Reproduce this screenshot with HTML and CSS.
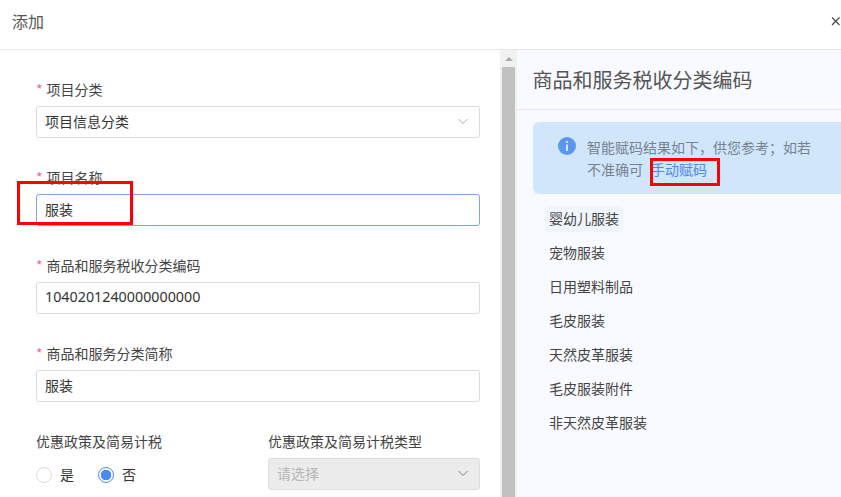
FILE: index.html
```html
<!DOCTYPE html>
<html lang="zh">
<head>
<meta charset="utf-8">
<title>添加</title>
<link rel="stylesheet" href="styles.css">
</head>
<body>
<div class="dialog">
  <header class="head">
    <span class="title">添加</span>
    <svg class="close" viewBox="0 0 10 10"><path d="M1 1.500l7.500 7.500M8.500 1.500L1 9"/></svg>
  </header>
  <div class="main">
    <form class="form">
      <div class="field">
        <div class="label"><i>*</i>项目分类</div>
        <div class="input">项目信息分类
          <svg class="chev" viewBox="0 0 12 7"><path d="M1.500 1l4.500 4.500L10.500 1"/></svg>
        </div>
      </div>
      <div class="field">
        <div class="label"><i>*</i>项目名称</div>
        <div class="input focus">服装</div>
        <div class="mark m1"></div>
      </div>
      <div class="field">
        <div class="label"><i>*</i>商品和服务税收分类编码</div>
        <div class="input code">1040201240000000000</div>
      </div>
      <div class="field">
        <div class="label"><i>*</i>商品和服务分类简称</div>
        <div class="input">服装</div>
      </div>
      <div class="cols">
        <div class="col-a">
          <div class="label">优惠政策及简易计税</div>
          <div class="radios">
            <span class="radio"><b class="dot"></b>是</span>
            <span class="radio"><b class="dot on"></b>否</span>
          </div>
        </div>
        <div class="col-b">
          <div class="label">优惠政策及简易计税类型</div>
          <div class="input disabled">请选择
            <svg class="chev dark" viewBox="0 0 12 7"><path d="M1.500 1l4.500 4.500L10.500 1"/></svg>
          </div>
        </div>
      </div>
    </form>
    <div class="scrollbar">
      <svg class="arrow" viewBox="0 0 8 4"><path d="M4 0l4 4H0z"/></svg>
      <div class="thumb"></div>
    </div>
    <aside class="side">
      <h2 class="side-title">商品和服务税收分类编码</h2>
      <div class="notice">
        <svg class="info" viewBox="0 0 18 18"><circle cx="9" cy="9" r="9"/><rect x="8" y="7.500" width="2" height="6.500"/><rect x="8" y="4" width="2" height="2"/></svg>
        <p class="notice-text">智能赋码结果如下，供您参考；如若不准确可<a class="link">手动赋码</a></p>
        <span class="mark m2"></span>
      </div>
      <ul class="list">
        <li class="active">婴幼儿服装</li>
        <li>宠物服装</li>
        <li>日用塑料制品</li>
        <li>毛皮服装</li>
        <li>天然皮革服装</li>
        <li>毛皮服装附件</li>
        <li>非天然皮革服装</li>
      </ul>
    </aside>
  </div>
</div>
</body>
</html>
```
FILE: styles.css
```css
* { box-sizing: border-box; }
html, body { margin: 0; height: 100%; overflow: hidden; background: #fff; }
body { font-family: "Noto Sans CJK SC", "Liberation Sans", sans-serif; font-size: 14px; color: #333; }
.dialog { width: 841px; height: 497px; display: flex; flex-direction: column; overflow: hidden; }
.head { height: 50px; flex: none; border-bottom: 1px solid #e8e8e8; display: flex; align-items: center; justify-content: space-between; padding: 0 0 8px 12px; }
.title { font-size: 16px; color: #555; line-height: 42px; }
.close { width: 10px; height: 10px; fill: none; stroke: #444; stroke-width: 1.100; }
.main { flex: 1; display: flex; min-height: 0; }
.form { width: 500px; flex: none; padding: 30px 20px 0 36px; overflow: hidden; }
.field { position: relative; margin-bottom: 30px; }
.label { height: 26px; line-height: 18px; font-size: 14px; color: #444; white-space: nowrap; }
.label i { color: #f0648c; font-style: normal; margin-right: 4px; }
.input { position: relative; height: 32px; border: 1px solid #dcdcdc; border-radius: 3px; padding: 0 8px; line-height: 28px; font-size: 14px; color: #333; background: #fff; }
.input.focus { border-color: #7aa7ea; }
.input.code { font-family: "Noto Sans", "Liberation Sans", sans-serif; font-size: 14.300px; }
.input.disabled { background: #ececec; color: #b5b5b5; }
.chev { position: absolute; right: 10px; top: 11px; width: 12px; height: 7px; fill: none; stroke: #a8a8a8; stroke-width: 1; }
.chev.dark { stroke: #808080; }
.mark { position: absolute; border: 3px solid #f00; pointer-events: none; }
.m1 { left: -19px; top: 13px; width: 116px; height: 44px; }
.cols { display: flex; }
.col-a { width: 232px; flex: none; }
.col-b { flex: 1; }
.radios { display: flex; gap: 24px; }
.radio { display: flex; align-items: center; gap: 8px; height: 32px; color: #333; }
.dot { width: 16px; height: 16px; border-radius: 50%; border: 1px solid #dcdcdc; display: block; margin-top: 2px; }
.dot.on { border-color: #4a8af4; background: radial-gradient(circle, #4a8af4 0 5px, #fff 5.500px); }
.scrollbar { width: 17px; flex: none; background: #f1f1f1; padding: 0 2px; }
.arrow { display: block; width: 8px; height: 4px; margin: 7px auto 0; fill: #aaa; }
.thumb { height: 430px; margin-top: 6px; background: #c1c1c1; }
.side { flex: 1; background: #f9faff; min-width: 0; }
.side-title { margin: 0; height: 60px; border-bottom: 1px solid #e8e8e8; padding: 16px 0 0 15.500px; font-size: 20px; line-height: 28px; font-weight: 400; color: #555; white-space: nowrap; }
.notice { position: relative; margin: 12px 0 0 16px; height: 72px; background: #d1e5fb; border-radius: 6px 0 0 6px; display: flex; padding: 15px 0 0 25px; gap: 11px; }
.info { width: 18px; height: 18px; flex: none; fill: #5b96f0; }
.info rect { fill: #d1e5fb; }
.notice-text { margin: -1px 0 0; width: 228px; font-size: 14px; line-height: 22px; color: #76838f; }
.link { color: #4a8af4; margin-left: 8px; }
.m2 { left: 117px; top: 36px; width: 70px; height: 28px; }
.list { list-style: none; margin: 12px 0 0 28px; padding: 0; }
.list li { height: 26px; width: max-content; margin: 0 0 8px; padding: 0 4px; line-height: 24px; font-size: 14px; color: #444; border-radius: 3px; }
.list li.active { background: #f0f4fd; }
```
